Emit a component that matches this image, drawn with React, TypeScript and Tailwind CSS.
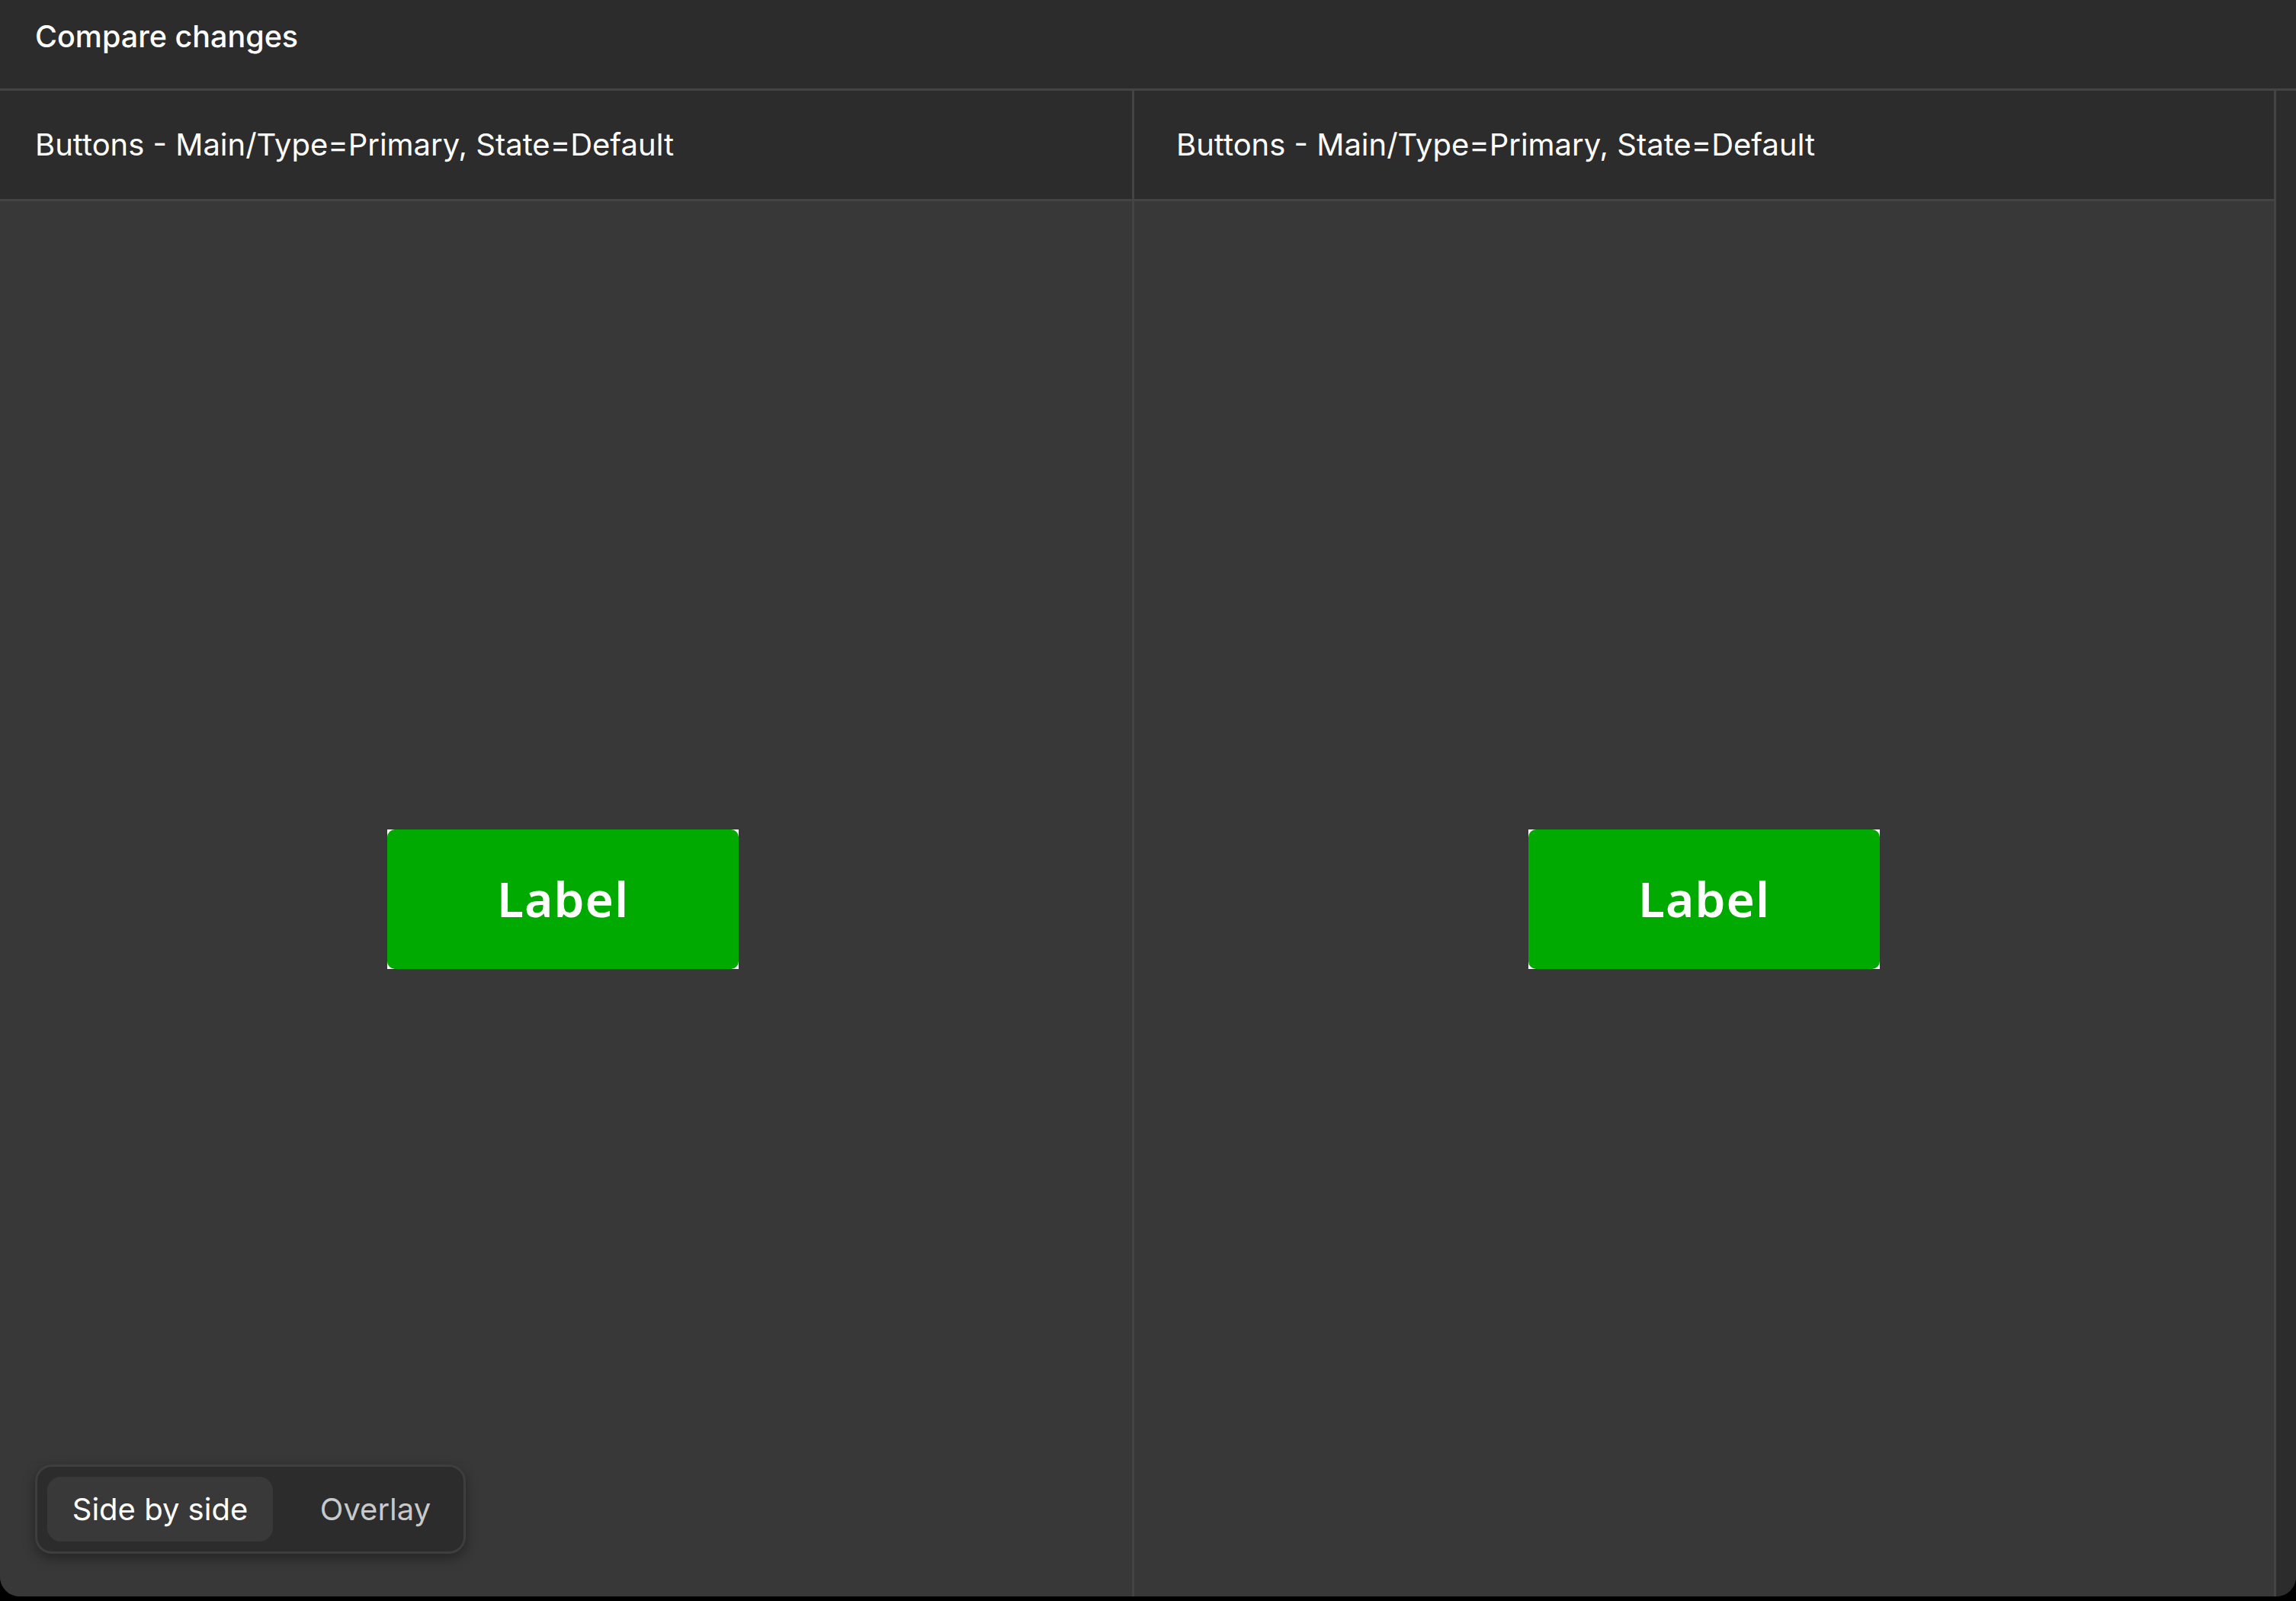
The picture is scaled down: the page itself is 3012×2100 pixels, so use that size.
import React from 'react';

const PANEL_TITLE = 'Buttons - Main/Type=Primary, State=Default';

function ButtonPreview() {
  return (
    <div className="h-[183px] w-[461px] bg-white">
      <div className="flex h-full w-full items-center justify-center rounded-[10px] bg-[#00aa00]">
        <span className="font-['Noto_Sans',sans-serif] text-[64px] font-semibold leading-none tracking-[1px] text-white">Label</span>
      </div>
    </div>
  );
}

function Panel({
  title,
  className = '',
  titleClass = 'pl-[46px]',
  canvasClass = '',
  children,
}: {
  title: string;
  className?: string;
  titleClass?: string;
  canvasClass?: string;
  children?: React.ReactNode;
}) {
  return (
    <div className={`relative flex flex-col border-r-[3px] border-[#444444] ${className}`}>
      {/* Panel title */}
      <div className={`flex h-[145px] shrink-0 items-center border-b-[3px] border-[#444444] bg-[#2c2c2c] ${titleClass}`}>
        <span className="text-[40px] text-white">{title}</span>
      </div>

      {/* Canvas */}
      <div className={`flex flex-1 items-center justify-center bg-[#383838] ${canvasClass}`}>
        <ButtonPreview />
      </div>
      {children}
    </div>
  );
}

function ViewToggle() {
  return (
    <div className="absolute bottom-[56px] left-[46px] flex h-[117px] w-[565px] items-center rounded-[22px] border-[3px] border-[#3e3e3e] bg-[#2c2c2c] px-[13px] shadow-[0_6px_16px_rgba(0,0,0,0.35)]">
      <div className="flex h-[85px] w-[296px] items-center justify-center rounded-[18px] bg-[#393939] text-[40px] text-white">
        Side by side
      </div>
      <div className="flex flex-1 items-center justify-center pl-[32px] text-[40px] text-[#c9c9c9]">Overlay</div>
    </div>
  );
}

export default function App() {
  return (
    <div className="h-[2100px] w-[3012px] overflow-hidden bg-black font-['Inter',sans-serif]">
      <div className="flex h-[2094px] flex-col overflow-hidden rounded-b-[26px] bg-[#2c2c2c]">
        {/* Window header */}
        <div className="flex h-[119px] shrink-0 items-center border-b-[3px] border-[#444444] pb-[18px] pl-[46px]">
          <span className="text-[39.5px] font-medium text-white">Compare changes</span>
        </div>

        <div className="flex flex-1">
          <div className="flex w-[2986px] shrink-0">
            <Panel title={PANEL_TITLE} className="w-[1488px] shrink-0" canvasClass="pr-[8px]">
              <ViewToggle />
            </Panel>
            <Panel title={PANEL_TITLE} className="flex-1" titleClass="pl-[55px]" />
          </div>
          <div className="flex-1 bg-[#2c2c2c]" />
        </div>
      </div>
    </div>
  );
}
